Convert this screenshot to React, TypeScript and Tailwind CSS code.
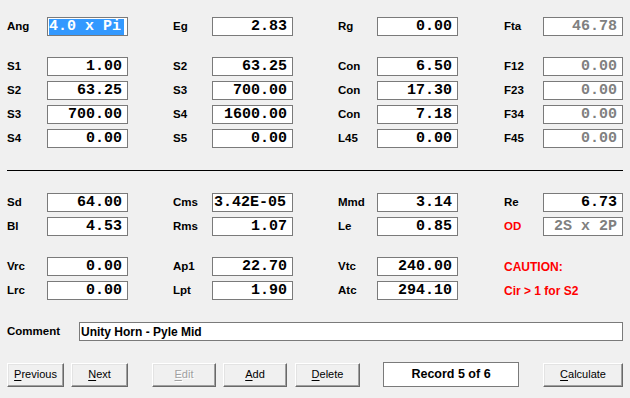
import React from "react";

type Cell = {
  label: string;
  value?: string;
  align?: "left" | "right";
  gray?: boolean;
  selected?: boolean;
  red?: boolean;
  redLabel?: boolean;
};

const LABEL_W = ["w-[40px]", "w-[39px]", "w-[39px]", "w-[39px]"];
const CELL_W = ["w-[166px]", "w-[165px]", "w-[166px]", "w-[119px]"];
const BOX_W = ["w-[81px]", "w-[81px]", "w-[81px]", "w-[80px]"];

function ValueBox({ cell, col }: { cell: Cell; col: number }) {
  const color = cell.gray ? "text-[#808080]" : "text-black";
  return (
    <div
      className={`${BOX_W[col]} h-[19px] border border-[#7a7a7a] bg-white flex items-center overflow-hidden ${
        cell.align === "left" ? "justify-start pl-px" : "justify-end pr-[5px]"
      }`}
    >
      {cell.selected ? (
        <span className="bg-[#3399ff] text-white font-['Liberation_Mono',monospace] font-bold text-[15px] leading-[16px] whitespace-pre pr-[3px]">
          {cell.value}
        </span>
      ) : (
        <span
          className={`${color} font-['Liberation_Mono',monospace] font-bold text-[15px] leading-[17px] whitespace-pre`}
        >
          {cell.value}
        </span>
      )}
    </div>
  );
}

function Row({ cells, className = "" }: { cells: (Cell | null)[]; className?: string }) {
  return (
    <div className={`flex items-center h-[19px] ${className}`}>
      {cells.map((c, i) => (
        <div key={i} className={`${CELL_W[i]} flex items-center h-full shrink-0`}>
          {c && (
            <>
              <div
                className={`${c.value === undefined ? "" : LABEL_W[i]} shrink-0 font-bold ${
                  c.red ? "text-[#ff0000] text-[12px]" : c.redLabel ? "text-[#ff0000] text-[11.5px]" : "text-black text-[11.5px]"
                } whitespace-pre`}
              >
                {c.label}
              </div>
              {c.value !== undefined && <ValueBox cell={c} col={i} />}
            </>
          )}
        </div>
      ))}
    </div>
  );
}

function Btn({
  label,
  u,
  w,
  disabled,
  className = "",
}: {
  label: string;
  u: number;
  w: string;
  disabled?: boolean;
  className?: string;
}) {
  const a = label.slice(0, u);
  const b = label.slice(u, u + 1);
  const c = label.slice(u + 1);
  return (
    <div
      className={`${w} h-[24px] shrink-0 flex items-center justify-center bg-[#f0f0f0] border border-t-white border-l-white border-r-[#696969] border-b-[#696969] shadow-[inset_-1px_-1px_#a0a0a0,inset_1px_1px_#e3e3e3] text-[11px] ${
        disabled ? "text-[#a0a0a0] [text-shadow:1px_1px_#ffffff]" : "text-black"
      } ${className}`}
    >
      <span className="whitespace-pre">
        {a}
        <span className="underline underline-offset-2">{b}</span>
        {c}
      </span>
    </div>
  );
}

export default function App() {
  return (
    <div className="w-[630px] h-[398px] bg-[#f0f0f0] overflow-hidden font-['Liberation_Sans',Arial,sans-serif]">
      <div className="pt-[17px] px-[7px] flex flex-col">
        <Row
          cells={[
            { label: "Ang", value: "4.0 x Pi", align: "left", selected: true },
            { label: "Eg", value: "2.83" },
            { label: "Rg", value: "0.00" },
            { label: "Fta", value: "46.78", gray: true },
          ]}
        />
        <div className="mt-[21px] flex flex-col gap-[5px]">
          <Row
            cells={[
              { label: "S1", value: "1.00" },
              { label: "S2", value: "63.25" },
              { label: "Con", value: "6.50" },
              { label: "F12", value: "0.00", gray: true },
            ]}
          />
          <Row
            cells={[
              { label: "S2", value: "63.25" },
              { label: "S3", value: "700.00" },
              { label: "Con", value: "17.30" },
              { label: "F23", value: "0.00", gray: true },
            ]}
          />
          <Row
            cells={[
              { label: "S3", value: "700.00" },
              { label: "S4", value: "1600.00" },
              { label: "Con", value: "7.18" },
              { label: "F34", value: "0.00", gray: true },
            ]}
          />
          <Row
            cells={[
              { label: "S4", value: "0.00" },
              { label: "S5", value: "0.00" },
              { label: "L45", value: "0.00" },
              { label: "F45", value: "0.00", gray: true },
            ]}
          />
        </div>
        <div className="mt-[22px] h-px bg-black w-[616px]" />
        <div className="mt-[22px] flex flex-col gap-[5px]">
          <Row
            cells={[
              { label: "Sd", value: "64.00" },
              { label: "Cms", value: "3.42E-05", align: "left" },
              { label: "Mmd", value: "3.14" },
              { label: "Re", value: "6.73" },
            ]}
          />
          <Row
            cells={[
              { label: "Bl", value: "4.53" },
              { label: "Rms", value: "1.07" },
              { label: "Le", value: "0.85" },
              { label: "OD", value: "2S x 2P", gray: true, redLabel: true },
            ]}
          />
        </div>
        <div className="mt-[21px] flex flex-col gap-[5px]">
          <Row
            cells={[
              { label: "Vrc", value: "0.00" },
              { label: "Ap1", value: "22.70" },
              { label: "Vtc", value: "240.00" },
              { label: "CAUTION:", red: true },
            ]}
          />
          <Row
            cells={[
              { label: "Lrc", value: "0.00" },
              { label: "Lpt", value: "1.90" },
              { label: "Atc", value: "294.10" },
              { label: "Cir > 1 for S2", red: true },
            ]}
          />
        </div>
        <div className="mt-[22px] flex items-center h-[19px]">
          <div className="w-[72px] shrink-0 font-bold text-[11.5px]">Comment</div>
          <div className="w-[544px] h-[19px] border border-[#7a7a7a] bg-white flex items-center pl-[1px]">
            <span className="font-bold text-[12px] text-black whitespace-pre">Unity Horn - Pyle Mid</span>
          </div>
        </div>
        <div className="mt-[21px] flex items-center">
          <Btn label="Previous" u={0} w="w-[57px]" />
          <Btn label="Next" u={0} w="w-[57px]" className="ml-[7px]" />
          <Btn label="Edit" u={0} w="w-[64px]" disabled className="ml-[24px]" />
          <Btn label="Add" u={0} w="w-[64px]" className="ml-[7px]" />
          <Btn label="Delete" u={0} w="w-[65px]" className="ml-[8px]" />
          <div className="ml-[23px] w-[136px] h-[25px] shrink-0 border border-[#7a7a7a] bg-white flex items-center justify-center font-bold text-[12.5px] text-black">
            Record 5 of 6
          </div>
          <Btn label="Calculate" u={0} w="w-[80px]" className="ml-[24px]" />
        </div>
      </div>
    </div>
  );
}
